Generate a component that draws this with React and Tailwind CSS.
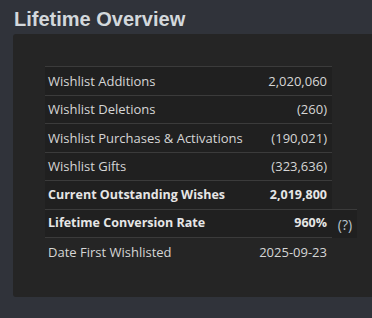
const rows = [
  { label: 'Wishlist Additions', value: '2,020,060' },
  { label: 'Wishlist Deletions', value: '(260)' },
  { label: 'Wishlist Purchases & Activations', value: '(190,021)' },
  { label: 'Wishlist Gifts', value: '(323,636)' },
  { label: 'Current Outstanding Wishes', value: '2,019,800', bold: true },
  { label: 'Lifetime Conversion Rate', value: '960%', bold: true, help: true },
];

export default function App() {
  return (
    <div className="w-[372px] h-[318px] overflow-hidden bg-[#30333a] pl-[12px] pt-[7px] font-['Liberation_Sans',Arial,sans-serif]">
      <h2 className="ml-[2px] text-[20px] leading-[24px] font-bold text-[#d3d8dc]">Lifetime Overview</h2>

      <div className="mt-[3px] ml-[1px] h-[263px] rounded-tl-[3px] rounded-bl-[3px] bg-[#252525] pl-[32px] pt-[32px]">
        <table className="border-collapse text-[13px] text-[#d6d6d6] font-['Open_Sans',sans-serif]">
          <tbody>
            {rows.map((r) => (
              <tr key={r.label} className={r.bold ? 'font-bold text-[12.5px] text-[#e6e6e6]' : ''}>
                <td className="w-[207px] h-[28.5px] p-0 pt-[1px] pl-[3px] border-t border-[#3b3b3b] bg-[#202020]">{r.label}</td>
                <td className="w-[80px] h-[28.5px] p-0 pt-[1px] pr-[5px] text-right border-t border-[#3b3b3b] bg-[#202020]">{r.value}</td>
                {r.help && (
                  <td className="w-[25px] h-[28.5px] p-0 pt-[1px] pl-[1px] text-center font-normal text-[14px] text-[#b7c3cd] border-t border-[#3b3b3b] bg-[#202020]">(?)</td>
                )}
              </tr>
            ))}
            <tr>
              <td className="h-[28.5px] p-0 pt-[1px] pl-[3px] border-t border-[#3b3b3b]">Date First Wishlisted</td>
              <td className="h-[28.5px] p-0 pt-[1px] pr-[5px] text-right border-t border-[#3b3b3b]">2025-09-23</td>
            </tr>
          </tbody>
        </table>
      </div>
    </div>
  );
}
